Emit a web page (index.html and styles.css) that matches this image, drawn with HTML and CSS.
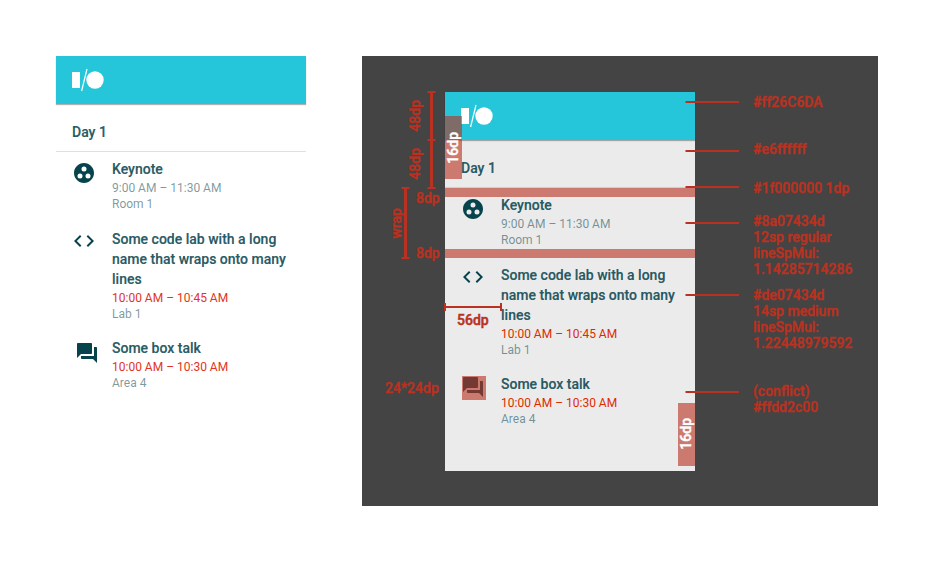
FILE: index.html
```html
<!DOCTYPE html>
<html lang="en">
<head>
<meta charset="utf-8">
<title>Schedule redlines</title>
<link rel="stylesheet" href="styles.css">
</head>
<body>
<svg class="defs" width="0" height="0">
  <symbol id="logo" viewBox="0 0 34 24"><path fill="#fff" d="M0 4h8v16H0z"/><path stroke="#fff" stroke-width="1.2" d="M9.6 23L15 1"/><circle cx="23" cy="12" r="8.7" fill="#fff"/></symbol>
  <symbol id="group" viewBox="0 0 24 24"><path d="M12 2C6.480 2 2 6.480 2 12s4.480 10 10 10 10-4.480 10-10S17.520 2 12 2zM8 17.500a2.500 2.500 0 1 1 0-5 2.500 2.500 0 0 1 0 5zM9.500 8a2.500 2.500 0 1 1 5 0 2.500 2.500 0 0 1-5 0zm6.500 9.500a2.500 2.500 0 1 1 0-5 2.500 2.500 0 0 1 0 5z"/></symbol>
  <symbol id="code" viewBox="0 0 24 24"><path d="M9.400 16.600L4.800 12l4.600-4.600L8 6l-6 6 6 6 1.400-1.400zm5.200 0l4.600-4.600-4.600-4.600L16 6l6 6-6 6-1.400-1.400z"/></symbol>
  <symbol id="chat" viewBox="0 0 24 24"><path d="M21 6h-2v9H6v2c0 .55.45 1 1 1h11l4 4V7c0-.55-.45-1-1-1zm-4 6V3c0-.55-.45-1-1-1H3c-.55 0-1 .45-1 1v14l4-4h10c.55 0 1-.45 1-1z"/></symbol>
</svg>
<main class="board">
  <section class="card">
    <header class="appbar"><svg class="logo"><use href="#logo"/></svg></header>
    <h2 class="day">Day 1</h2>
    <ul class="sessions">
      <li class="session"><svg class="icon"><use href="#group"/></svg>
        <div class="info"><h3>Keynote</h3><p>9:00 AM – 11:30 AM</p><p>Room 1</p></div></li>
      <li class="session long"><svg class="icon"><use href="#code"/></svg>
        <div class="info"><h3>Some code lab with a long name that wraps onto many lines</h3><p class="conflict">10:00 AM – 10:45 AM</p><p class="place">Lab 1</p></div></li>
      <li class="session"><svg class="icon nudged"><use href="#chat"/></svg>
        <div class="info"><h3>Some box talk</h3><p class="conflict">10:00 AM – 10:30 AM</p><p class="place">Area 4</p></div></li>
    </ul>
  </section>
  <section class="spec">
    <div class="card tinted">
      <header class="appbar"><svg class="logo"><use href="#logo"/></svg></header>
      <h2 class="day">Day 1</h2>
      <ul class="sessions">
        <li class="session"><svg class="icon"><use href="#group"/></svg>
          <div class="info"><h3>Keynote</h3><p>9:00 AM – 11:30 AM</p><p>Room 1</p></div></li>
        <li class="session long"><svg class="icon"><use href="#code"/></svg>
          <div class="info"><h3>Some code lab with a long name that wraps onto many lines</h3><p class="conflict">10:00 AM – 10:45 AM</p><p class="place">Lab 1</p></div></li>
        <li class="session"><svg class="icon"><use href="#chat"/></svg>
          <div class="info"><h3>Some box talk</h3><p class="conflict">10:00 AM – 10:30 AM</p><p class="place">Area 4</p></div></li>
      </ul>
    </div>
    <svg class="marks" width="516" height="450" viewBox="362 56 516 450">
      <g class="zone">
        <path d="M445 188h250v9H445zM445 249h250v9H445zM445 116h17v63h-17zM678 403h17v63h-17zM462 376h24v24h-24z"/>
      </g>
      <g class="rule">
        <path class="thick" d="M431.500 92v96M405.500 188v70"/>
        <path d="M427.500 92h8M427.500 140h8M427.500 188h8M401.500 188h8M401.500 258h8M445 307h56M445 303v8M501 303v8"/>
        <path d="M685.500 102H739M685.500 151H739M685.500 187H739M685.500 223H739M685.500 295H739M685.500 392H739"/>
      </g>
    </svg>
    <span class="label up bar-height">48dp</span>
    <span class="label up day-height">48dp</span>
    <span class="label up row-height">wrap</span>
    <span class="label up inset-left">16dp</span>
    <span class="label up inset-right">16dp</span>
    <span class="label pad-top">8dp</span>
    <span class="label pad-bottom">8dp</span>
    <span class="label indent">56dp</span>
    <span class="label icon-size">24*24dp</span>
    <p class="label note n1">#ff26C6DA</p>
    <p class="label note n2">#e6ffffff</p>
    <p class="label note n3">#1f000000 1dp</p>
    <p class="label note n4">#8a07434d<br>12sp regular<br>lineSpMul:<br>1.14285714286</p>
    <p class="label note n5">#de07434d<br>14sp medium<br>lineSpMul:<br>1.22448979592</p>
    <p class="label note n6">(conflict)<br>#ffdd2c00</p>
  </section>
</main>
</body>
</html>
```
FILE: styles.css
```css
* { box-sizing: border-box; }
body { margin: 0; background: #fff; font-family: Roboto, sans-serif; }
h2, h3, p, ul { margin: 0; padding: 0; }
ul { list-style: none; }
.defs { position: absolute; }
.board { display: flex; align-items: flex-start; gap: 56px; width: 934px; height: 562px; padding: 56px; }
.card { width: 250px; height: 379px; background: #fff; flex: none; }
.tinted { background: #ebebeb; }
.appbar { display: flex; align-items: center; height: 48px; padding-left: 16px; background: #26c6da; box-shadow: 0 1px 1px rgba(0, 0, 0, .3); }
.logo { width: 34px; height: 24px; }
.day { height: 48px; padding: 18px 16px 0; border-bottom: 1px solid rgba(0, 0, 0, .12); font-size: 14px; font-weight: 500; line-height: 20px; color: rgba(7, 67, 77, .87); }
.day, .info h3 { -webkit-text-stroke: .2px; }
.sessions { padding-top: 7px; }
.session { display: flex; padding-left: 16px; height: 70px; }
.session.long { height: 109px; }
.icon { flex: none; width: 24px; height: 24px; margin: 2px 16px 0 0; fill: #07434d; }
.long .icon { margin-top: 0; }
.session:last-child .icon { margin-top: 1px; }
.session:last-child .icon.nudged { margin: 3px 13px 0 3px; }
.info { width: 186px; }
.info h3 { margin-bottom: 1px; font-size: 14px; font-weight: 500; line-height: 20px; color: rgba(7, 67, 77, .87); }
.info p { font-size: 12px; line-height: 16px; color: rgba(7, 67, 77, .54); }
.info .conflict { color: #e23424; }
.tinted .info .conflict { color: #dd2c00; }
.spec { position: relative; width: 516px; height: 450px; padding: 36px 83px; background: #444; }
.marks { position: absolute; left: 0; top: 0; }
.zone { fill: rgba(184, 50, 33, .61); }
.rule { fill: none; stroke: #b93221; stroke-width: 2; }
.thick { stroke-width: 3; }
.label { position: absolute; font-size: 14px; font-weight: 500; -webkit-text-stroke: .45px; line-height: 16px; color: #b93221; white-space: nowrap; }
.up { writing-mode: vertical-rl; transform: rotate(180deg); }
.bar-height { left: 45px; top: 44px; }
.day-height { left: 45px; top: 92px; }
.row-height { left: 26px; top: 152px; }
.inset-left { left: 83px; top: 76px; color: #fff; }
.inset-right { left: 316px; top: 362px; color: #fff; }
.pad-top { left: 54px; top: 134px; }
.pad-bottom { left: 54px; top: 189px; }
.indent { left: 95px; top: 256px; }
.icon-size { left: 23px; top: 324px; }
.note { left: 391px; }
.n1 { top: 38px; }
.n2 { top: 85px; }
.n3 { top: 124px; }
.n4 { top: 157px; }
.n5 { top: 231px; }
.n6 { top: 327px; }
```
